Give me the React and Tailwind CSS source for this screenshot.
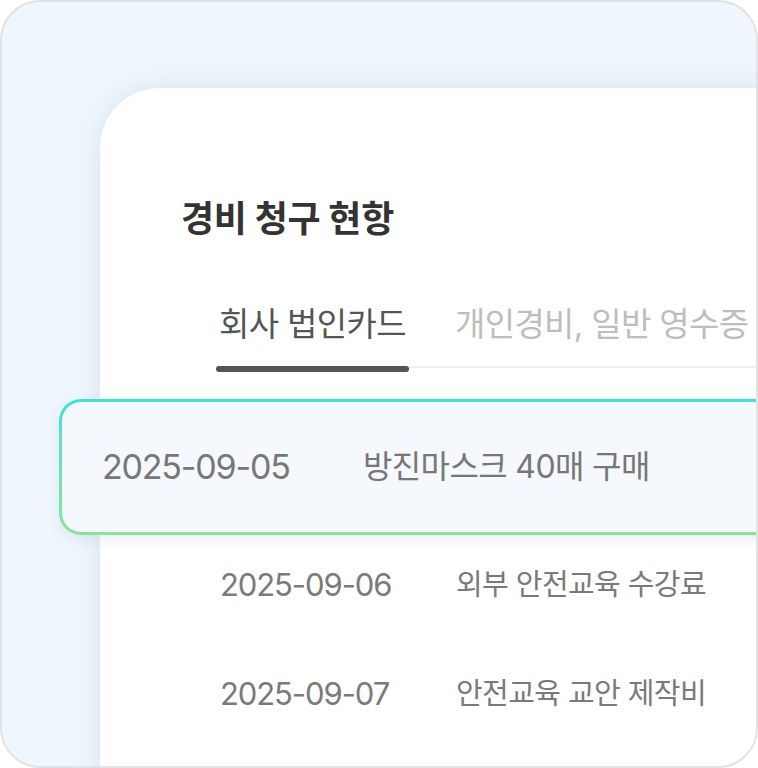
const rows = [
  { date: '2025-09-06', title: '외부 안전교육 수강료' },
  { date: '2025-09-07', title: '안전교육 교안 제작비' },
];

export default function App() {
  return (
    <div className="w-[758px] h-[768px] bg-white font-['Inter','Noto_Sans_CJK_KR',sans-serif]">
      <div className="relative w-full h-full overflow-hidden rounded-[40px] border-2 border-[#e2e2e2] bg-[#eff6fd] pl-[98px] pt-[86px]">
        <div className="h-[700px] w-[700px] rounded-tl-[60px] bg-white shadow-[0_0_26px_rgba(110,140,180,0.18)]">
          <h1 className="ml-[81px] pt-[113px] text-[36px] leading-none font-bold tracking-[-0.01em] text-[#333333]">
            경비 청구 현항
          </h1>

          <div className="ml-[116px] mt-[71px] flex gap-[46px] border-b-2 border-[#efefef]">
            <div className="relative w-[193px] pb-[25px] text-center text-[33px] leading-none font-normal tracking-[-0.02em] text-[#555555]">
              회사 법인카드
              <span className="absolute left-0 top-full h-[6px] w-full rounded-full bg-[#555555]" />
            </div>
            <div className="pb-[25px] text-[33px] leading-none font-normal tracking-[-0.02em] text-[#bdbdbd]">
              개인경비, 일반 영수증
            </div>
          </div>

          <div className="-ml-[41px] mt-[31px] rounded-[22px] bg-gradient-to-b from-[#3be2d6] to-[#86e59a] p-[3px] shadow-[0_4px_14px_rgba(90,120,160,0.12)]">
            <div className="flex h-[130px] items-center rounded-[19px] bg-[#f5f8fc] pl-[40px] text-[#777777]">
              <span className="w-[261px] text-[34px] leading-none tracking-[-0.035em]">2025-09-05</span>
              <span className="text-[32px] leading-none tracking-[-0.02em]">방진마스크 40매 구매</span>
            </div>
          </div>

          <div className="flex flex-col gap-[78px] pt-[34px] pl-[120px] text-[#7a7a7a]">
            {rows.map((r) => (
              <div key={r.date} className="flex h-[31px] items-center">
                <span className="w-[236px] text-[31px] leading-none tracking-[-0.035em]">{r.date}</span>
                <span className="text-[29px] leading-none tracking-[-0.02em]">{r.title}</span>
              </div>
            ))}
          </div>
        </div>
      </div>
    </div>
  );
}
